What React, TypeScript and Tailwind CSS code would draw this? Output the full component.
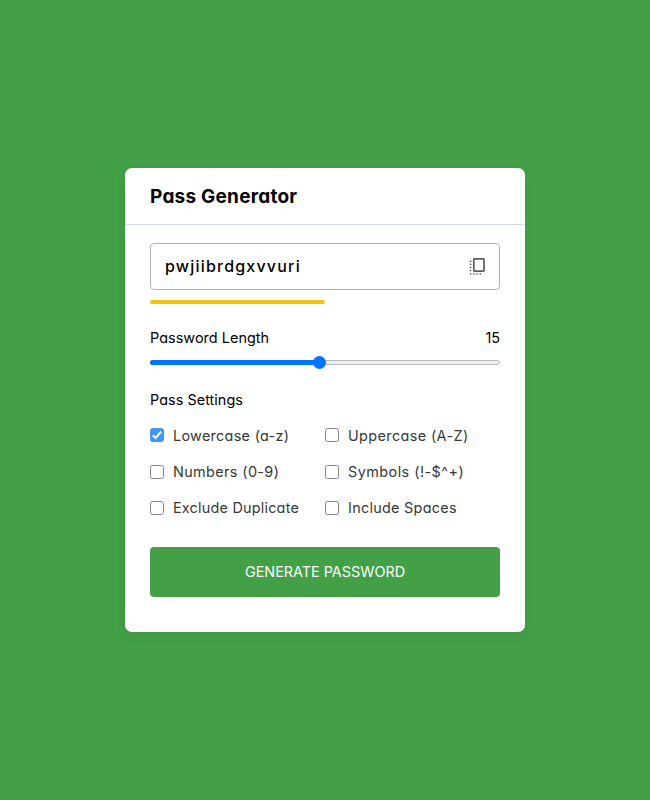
import { useState } from "react";

const OPTIONS = [
  { label: "Lowercase (a-z)", tracking: "tracking-[0.3px]" },
  { label: "Uppercase (A-Z)", tracking: "tracking-[0.4px]" },
  { label: "Numbers (0-9)", tracking: "tracking-[0.38px]" },
  { label: "Symbols (!-$^+)", tracking: "tracking-[0.46px]" },
  { label: "Exclude Duplicate", tracking: "tracking-[0.22px]" },
  { label: "Include Spaces", tracking: "tracking-[0.28px]" },
];

function CopyIcon() {
  return (
    <svg width="18" height="20" viewBox="0 0 18 20" fill="none" stroke="#5c5c5c">
      <rect x="4.8" y="1.8" width="10.2" height="12.4" rx="0.6" strokeWidth="1.7" />
      <g fill="#555" stroke="none">
        {[4.3, 7.4, 10.5, 13.6, 17].map((y) => (
          <rect key={y} x="0.8" y={y - 0.7} width="1.5" height="1.4" />
        ))}
        {[5, 8.1, 11.3].map((x) => (
          <rect key={x} x={x - 0.7} y="16.3" width="1.4" height="1.4" />
        ))}
      </g>
    </svg>
  );
}

function Check({ label, tracking, checked, onChange }: { label: string; tracking: string; checked: boolean; onChange: () => void }) {
  return (
    <label className="flex h-[36.4px] items-center gap-[9px] text-[14.4px] font-normal text-[#383838]">
      <span className={"flex size-[14px] shrink-0 items-center justify-center rounded-[2.5px] border " + (checked ? "border-[#4495fb] bg-[#4495fb]" : "border-[#858585] bg-white")}>
        <input type="checkbox" className="sr-only" checked={checked} onChange={onChange} />
        {checked && (
          <svg className="shrink-0" width="12" height="12" viewBox="0 0 12 12" fill="none" stroke="white" strokeWidth="2">
            <path d="M1.8 6.3 4.6 9 10.2 2.5" />
          </svg>
        )}
      </span>
      <span className={"whitespace-nowrap " + tracking}>{label}</span>
    </label>
  );
}

export default function App() {
  const [length, setLength] = useState(15);
  const [enabled, setEnabled] = useState<string[]>(["Lowercase (a-z)"]);
  const toggle = (l: string) => setEnabled((e) => (e.includes(l) ? e.filter((x) => x !== l) : [...e, l]));

  return (
    <main className="flex h-[800px] items-center justify-center bg-[#43a047] font-['Inter','Liberation_Sans',sans-serif] text-black [font-feature-settings:'cv11']">
      <section className="h-[464px] w-[400px] rounded-[7px] bg-white shadow-[0_4px_12px_rgba(0,0,0,0.06)]">
        <h1 className="flex h-[57px] items-center border-b border-[#d6dbec] px-[25px] pt-[2px] text-[19px] font-bold tracking-[0.23px]">
          <span>Pass Generator</span>
        </h1>
        <div className="px-[25px] pt-[18px]">
          <div className="flex h-[47px] items-center justify-between rounded-[4px] border border-[#b3b3b3] pr-[12px] pl-[14px]">
            <span className="pb-[2px] text-[16px] font-medium tracking-[1.2px]">pwjiibrdgxvvuri</span>
            <button aria-label="Copy password"><CopyIcon /></button>
          </div>
          <div className="mt-[10.3px] h-[3.7px] w-full rounded-full">
            <div className="h-full w-1/2 rounded-full bg-[#f1c40f]" />
          </div>
          <div className="mt-[21.6px] flex h-[24px] items-center justify-between text-[14.4px]">
            <span className="tracking-[0.05px]">Password Length</span>
            <span>{length}</span>
          </div>
          <div className="mt-[6px] grid h-[13px] items-center">
            <div className="col-start-1 row-start-1 h-[5px] overflow-hidden rounded-full border border-[#b9b9b9] bg-[#efefef]" />
            <div className="col-start-1 row-start-1 h-[5px] rounded-full bg-[#0075ff]" style={{ width: `${((length - 1) / 29) * 96.3 + 1.8}%` }} />
            <input
              type="range"
              min={1}
              max={30}
              value={length}
              onChange={(e) => setLength(Number(e.target.value))}
              className="z-10 col-start-1 row-start-1 h-[13px] w-full appearance-none bg-transparent [&::-webkit-slider-thumb]:size-[13px] [&::-webkit-slider-thumb]:appearance-none [&::-webkit-slider-thumb]:rounded-full [&::-webkit-slider-thumb]:bg-[#0075ff]"
            />
          </div>
          <h2 className="mt-[19px] flex h-[24px] items-center text-[14.4px] tracking-[0.05px]">
            <span>Pass Settings</span>
          </h2>
          <div className="mt-[5.6px] grid grid-cols-2">
            {OPTIONS.map((o) => (
              <Check key={o.label} {...o} checked={enabled.includes(o.label)} onChange={() => toggle(o.label)} />
            ))}
          </div>
          <button className="mt-[20.3px] h-[50px] w-full rounded-[4px] bg-[#43a047] text-[14.4px] text-white">
            <span>GENERATE PASSWORD</span>
          </button>
        </div>
      </section>
    </main>
  );
}
